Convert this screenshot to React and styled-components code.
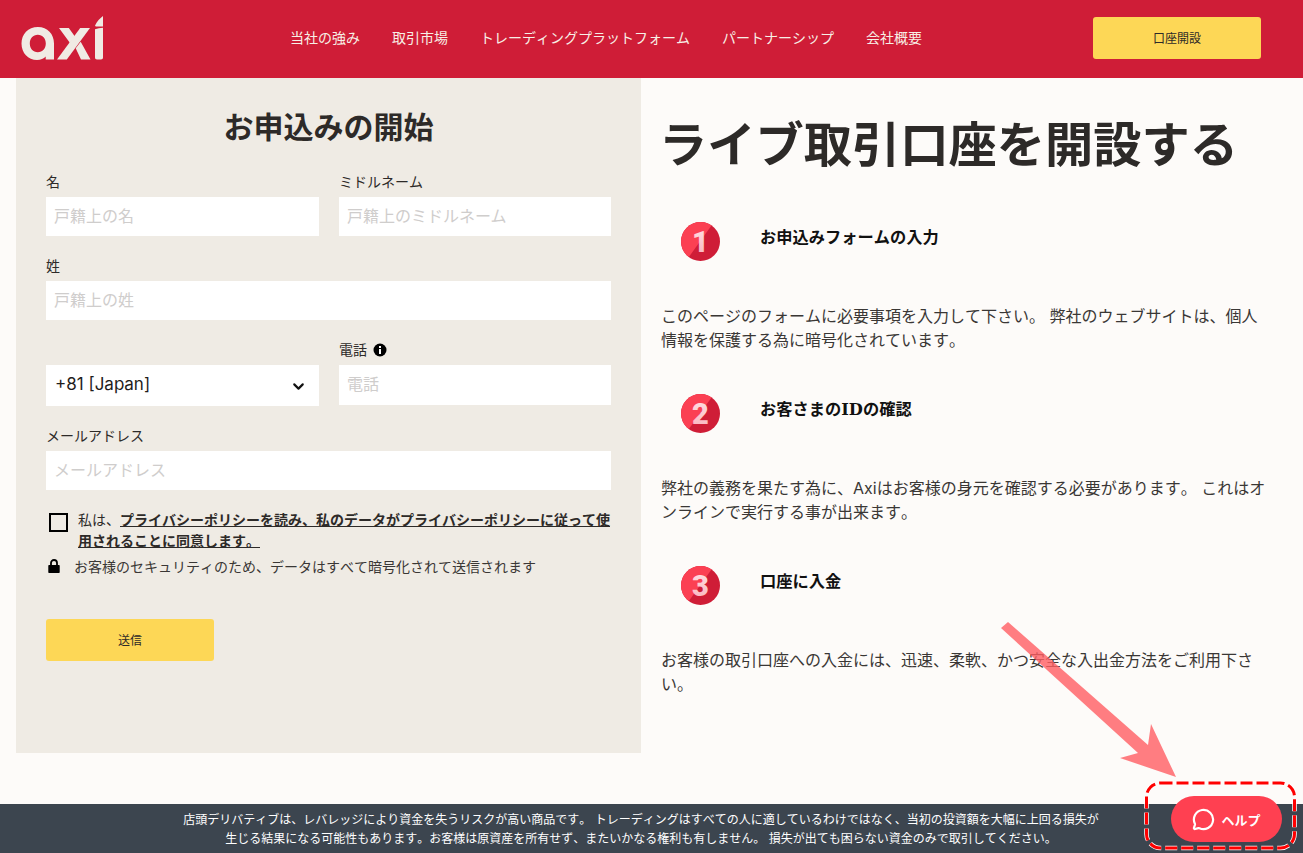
import React from "react";
import styled, { createGlobalStyle } from "styled-components";
import { ChevronDown, MessageCircle } from "lucide-react";

const JP = `"Inter", "Noto Sans CJK JP", sans-serif`;

const Global = createGlobalStyle`
  html, body { margin: 0; padding: 0; background: #fdfbf9; }
  body { font-family: ${JP}; color: #2d2a28; overflow: hidden; font-kerning: none; }
  * { box-sizing: border-box; }
`;

const Page = styled.div`
  position: relative;
  width: 1303px;
  height: 853px;
  overflow: hidden;
  display: flex;
  flex-direction: column;
`;

const Header = styled.header`
  height: 78px;
  flex: none;
  background: #cf1d37;
  display: flex;
  align-items: center;
  padding: 0 42px 2px 20px;
`;

const Logo = styled.svg`
  width: 84px;
  height: 46px;
  flex: none;
`;

const Nav = styled.nav`
  display: flex;
  gap: 32px;
  margin-left: 186px;
  flex: 1;
`;

const NavLink = styled.a`
  color: #f7efe6;
  font-size: 14px;
  line-height: 20px;
  white-space: nowrap;
`;

const YellowButton = styled.button`
  width: ${(p) => p.$w}px;
  height: ${(p) => p.$h}px;
  border: 0;
  border-radius: 3px;
  background: #fdd756;
  color: #2d2a28;
  font-family: ${JP};
  font-size: 12px;
  padding: 0 0 2px;
`;

const Main = styled.main`
  display: flex;
  flex: none;
  height: 675px;
  padding-left: 16px;
`;

const FormPanel = styled.section`
  width: 625px;
  flex: none;
  background: #efebe4;
  padding: 30px 30px 0;
`;

const FormTitle = styled.h2`
  margin: 0 0 26px;
  text-align: center;
  font-size: 30px;
  line-height: 38px;
  font-weight: 700;
  color: #2d2a28;
`;

const FieldRow = styled.div`
  display: grid;
  grid-template-columns: 273px 272px;
  column-gap: 20px;
  margin-bottom: 20px;
`;

const Field = styled.div`
  grid-column: ${(p) => (p.$wide ? "1 / -1" : "auto")};
  display: flex;
  flex-direction: column;
`;

const Label = styled.label`
  display: flex;
  align-items: center;
  gap: 6px;
  font-size: 14px;
  line-height: 20px;
  height: 20px;
  margin-bottom: 5px;
  color: #2d2a28;
`;

const InfoIcon = styled.svg`
  width: 14px;
  height: 14px;
  flex: none;
`;

const Input = styled.input`
  display: block;
  width: 100%;
  height: ${(p) => p.$h || 39}px;
  border: 0;
  outline: 0;
  background: #fff;
  padding: 0 8px 2px;
  font-family: ${JP};
  font-size: 16px;
  &::placeholder { color: #cfcdcc; opacity: 1; }
`;

const SelectBox = styled.div`
  height: 41px;
  margin-top: 25px;
  background: #fff;
  display: flex;
  align-items: center;
  justify-content: space-between;
  padding: 0 12px 3px 9px;
  font-size: 17px;
  color: #1f1d1c;
`;

const SelectArrow = styled(ChevronDown)`
  margin-top: 5px;
`;

const Consent = styled.div`
  display: flex;
  align-items: flex-start;
  margin-top: -1px;
`;

const Checkbox = styled.span`
  width: 19px;
  height: 19px;
  border: 2px solid #000;
  background: transparent;
  flex: none;
  margin: 4px 10px 0 3px;
`;

const ConsentText = styled.p`
  margin: 0;
  font-size: 14px;
  line-height: 21px;
  color: #2d2a28;
`;

const ConsentLink = styled.a`
  font-weight: 700;
  text-decoration: underline;
`;

const Security = styled.div`
  display: flex;
  align-items: center;
  gap: 14px;
  margin: 6px 0 42px 2px;
  font-size: 14px;
  line-height: 20px;
  color: #3a3735;
`;

const LockIcon = styled.svg`
  width: 12px;
  height: 14px;
  flex: none;
  margin-top: -3px;
`;

const Content = styled.section`
  flex: 1;
  padding: 34px 0 0 20px;
`;

const PageTitle = styled.h1`
  margin: 0 0 44px -2px;
  font-size: 48.25px;
  line-height: 66px;
  font-weight: 700;
  color: #2d2a28;
  white-space: nowrap;
`;

const Step = styled.article`
  margin-bottom: 42px;
`;

const StepHead = styled.div`
  display: flex;
  align-items: flex-start;
  height: 82px;
  padding-left: 20px;
`;

const Badge = styled.svg`
  width: 39px;
  height: 39px;
  flex: none;
`;

const BadgeDigit = styled.text`
  font-family: "Roboto", sans-serif;
  font-size: 29px;
  font-weight: 900;
`;

const StepTitle = styled.h3`
  margin: 4px 0 0 40px;
  font-family: "DejaVu Serif", "Noto Sans CJK JP", serif;
  font-size: 16.25px;
  line-height: 24px;
  font-weight: 700;
  color: #111;
`;

const StepText = styled.p`
  margin: 0;
  width: 610px;
  font-size: 16px;
  line-height: 24px;
  color: #3a3735;
`;

const Footer = styled.footer`
  margin-top: 51px;
  height: 49px;
  flex: none;
  background: #3c454f;
  color: #fff;
  padding: 6px 0 0 181px;
`;

const Risk = styled.p`
  margin: 0;
  width: 920px;
  text-align: center;
  font-size: 12px;
  line-height: 19px;
  font-weight: 400;
`;

const HelpButton = styled.button`
  position: absolute;
  left: 1171px;
  top: 796px;
  width: 111px;
  height: 46px;
  border: 0;
  border-radius: 23px;
  background: #ff4051;
  color: #fff;
  display: flex;
  align-items: center;
  justify-content: center;
  gap: 6px;
  padding: 0;
  font-family: ${JP};
  font-size: 13px;
  font-weight: 700;
`;

const Annotation = styled.svg`
  position: absolute;
  left: 0;
  top: 0;
  pointer-events: none;
`;

function StepBadge({ n }) {
  return (
    <Badge viewBox="0 0 39 39">
      <defs>
        <clipPath id={`badge-${n}`}>
          <circle cx="19.5" cy="19.5" r="19.5" />
        </clipPath>
        <linearGradient id={`digit-${n}`} x1="0" y1="0" x2="0" y2="1">
          <stop offset="0" stopColor="#ffe3e6" />
          <stop offset="1" stopColor="#f9b0bb" />
        </linearGradient>
      </defs>
      <circle cx="19.5" cy="19.5" r="19.5" fill="#cf1d37" />
      <path clipPath={`url(#badge-${n})`} d="M0 0H33L5 39H0z" fill="#fb4053" />
      <BadgeDigit x="19.5" y="30" textAnchor="middle" fill={`url(#digit-${n})`}>{n}</BadgeDigit>
    </Badge>
  );
}

export default function App() {
  return (
    <Page>
      <Global />
      <Header>
        <Logo viewBox="0 0 84 46" aria-label="axi">
          <path
            fill="#f0ebe4"
            fillRule="evenodd"
            d="M18 12C8 12 1.500 19.300 1.500 28.500 1.500 38 8 45 17 45c3.700 0 6.800-1.300 8.700-3.500V44.500h8.300V28.500C34 19 27.500 12 18 12zM17.800 19.800c4.800 0 8 3.800 8 8.700s-3.200 8.700-8 8.700-8-3.800-8-8.700 3.200-8.700 8-8.700z"
          />
          <path fill="#f0ebe4" d="M37 44.500h9.800L70 13H60.200z" />
          <path fill="#f0ebe4" d="M39 13h9.800l6.100 8.400-4.900 6.500zM55.700 33.300l5-6.500L70.500 44.500H61z" />
          <path
            fill="#f0ebe4"
            d="M75 14.300c2.500-.8 5-1.300 8-1.500V42.500c0 1.300-.7 2-2 2h-4c-1.300 0-2-.7-2-2zM83 1v10.500h-7c-.8 0-1.100-.5-.8-1.200C77 6.500 79.800 3.300 83 1z"
          />
        </Logo>
        <Nav>
          <NavLink>当社の強み</NavLink>
          <NavLink>取引市場</NavLink>
          <NavLink>トレーディングプラットフォーム</NavLink>
          <NavLink>パートナーシップ</NavLink>
          <NavLink>会社概要</NavLink>
        </Nav>
        <YellowButton $w={168} $h={42}>口座開設</YellowButton>
      </Header>

      <Main>
        <FormPanel>
          <FormTitle>お申込みの開始</FormTitle>
          <FieldRow>
            <Field>
              <Label>名</Label>
              <Input placeholder="戸籍上の名" />
            </Field>
            <Field>
              <Label>ミドルネーム</Label>
              <Input placeholder="戸籍上のミドルネーム" />
            </Field>
          </FieldRow>
          <FieldRow>
            <Field $wide>
              <Label>姓</Label>
              <Input placeholder="戸籍上の姓" />
            </Field>
          </FieldRow>
          <FieldRow>
            <Field>
              <SelectBox>
                +81 [Japan]
                <SelectArrow size={17} strokeWidth={3} color="#111" />
              </SelectBox>
            </Field>
            <Field>
              <Label>
                電話
                <InfoIcon viewBox="0 0 14 14">
                  <circle cx="7" cy="7" r="6.500" fill="#000" />
                  <rect x="6" y="6" width="2" height="5" fill="#fff" />
                  <rect x="6" y="3" width="2" height="2" fill="#fff" />
                </InfoIcon>
              </Label>
              <Input $h={40} placeholder="電話" />
            </Field>
          </FieldRow>
          <FieldRow>
            <Field $wide>
              <Label>メールアドレス</Label>
              <Input placeholder="メールアドレス" />
            </Field>
          </FieldRow>
          <Consent>
            <Checkbox />
            <ConsentText>
              私は、<ConsentLink>プライバシーポリシーを読み、私のデータがプライバシーポリシーに従って使用されることに同意します。</ConsentLink>
            </ConsentText>
          </Consent>
          <Security>
            <LockIcon viewBox="0 0 12 14">
              <path d="M3 6.500V4a3 3 0 0 1 6 0v2.500" fill="none" stroke="#000" strokeWidth="1.800" />
              <path d="M1 6h10a.7.7 0 0 1 .7.7v6.600a.7.7 0 0 1-.7.7H1a.7.7 0 0 1-.7-.7V6.700A.7.7 0 0 1 1 6z" fill="#000" />
            </LockIcon>
            お客様のセキュリティのため、データはすべて暗号化されて送信されます
          </Security>
          <YellowButton $w={168} $h={42}>送信</YellowButton>
        </FormPanel>

        <Content>
          <PageTitle>ライブ取引口座を開設する</PageTitle>
          <Step>
            <StepHead>
              <StepBadge n={1} />
              <StepTitle>お申込みフォームの入力</StepTitle>
            </StepHead>
            <StepText>このページのフォームに必要事項を入力して下さい。 弊社のウェブサイトは、個人情報を保護する為に暗号化されています。</StepText>
          </Step>
          <Step>
            <StepHead>
              <StepBadge n={2} />
              <StepTitle>お客さまのIDの確認</StepTitle>
            </StepHead>
            <StepText>弊社の義務を果たす為に、Axiはお客様の身元を確認する必要があります。 これはオンラインで実行する事が出来ます。</StepText>
          </Step>
          <Step>
            <StepHead>
              <StepBadge n={3} />
              <StepTitle>口座に入金</StepTitle>
            </StepHead>
            <StepText>お客様の取引口座への入金には、迅速、柔軟、かつ安全な入出金方法をご利用下さい。</StepText>
          </Step>
        </Content>
      </Main>

      <Footer>
        <Risk>
          店頭デリバティブは、レバレッジにより資金を失うリスクが高い商品です。 トレーディングはすべての人に適しているわけではなく、当初の投資額を大幅に上回る損失が生じる結果になる可能性もあります。お客様は原資産を所有せず、またいかなる権利も有しません。 損失が出ても困らない資金のみで取引してください。
        </Risk>
      </Footer>

      <HelpButton>
        <MessageCircle size={23} strokeWidth={2.300} />
        ヘルプ
      </HelpButton>

      <Annotation width="1303" height="853" viewBox="0 0 1303 853">
        <path d="M1001 628L1008 622 1148 745 1151 724 1176 777 1120 758 1138 753z" fill="#ff5e63" fillOpacity="0.8" />
        <rect x="1146.500" y="783" width="148" height="65" rx="14" fill="none" stroke="#fff" strokeWidth="4.500" strokeDasharray="12 4" />
        <rect x="1146.500" y="783" width="148" height="65" rx="14" fill="none" stroke="#f00" strokeWidth="3" strokeDasharray="12 4" />
      </Annotation>
    </Page>
  );
}
